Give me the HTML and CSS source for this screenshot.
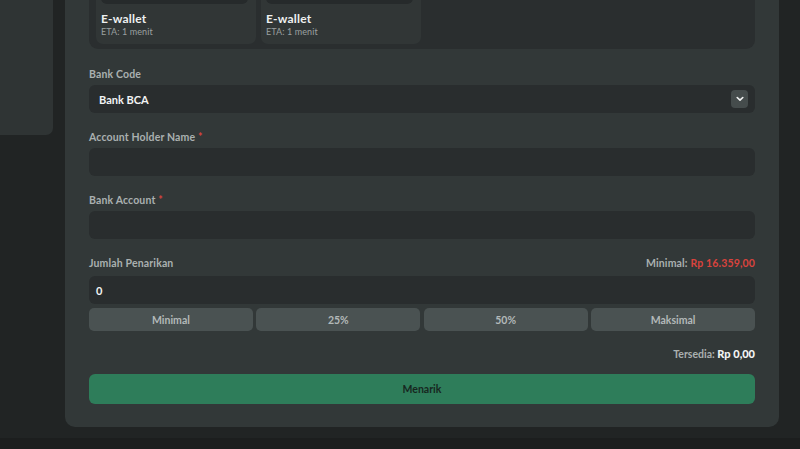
FILE: index.html
```html
<!DOCTYPE html>
<html lang="id">
<head>
<meta charset="utf-8">
<link rel="stylesheet" href="styles.css">
</head>
<body>
<div class="page">
  <aside class="sidebar"></aside>
  <main class="panel">
    <div class="methods">
      <div class="method">
        <div class="method-logo"></div>
        <div class="method-title">E-wallet</div>
        <div class="method-eta">ETA: 1 menit</div>
      </div>
      <div class="method">
        <div class="method-logo"></div>
        <div class="method-title">E-wallet</div>
        <div class="method-eta">ETA: 1 menit</div>
      </div>
    </div>

    <div class="field first">
      <div class="label">Bank Code</div>
      <div class="input select">
        <span class="value">Bank BCA</span>
        <span class="chev"><svg width="8" height="6" viewBox="0 0 8 6"><path d="M1.2 1.5 L4 4.2 L6.8 1.5" fill="none" stroke="#f2f4f4" stroke-width="1.6" stroke-linecap="round" stroke-linejoin="round"/></svg></span>
      </div>
    </div>

    <div class="field">
      <div class="label">Account Holder Name <span class="req">*</span></div>
      <div class="input"></div>
    </div>

    <div class="field">
      <div class="label">Bank Account <span class="req">*</span></div>
      <div class="input"></div>
    </div>

    <div class="field">
      <div class="label row">
        <span>Jumlah Penarikan</span>
        <span>Minimal: <span class="red">Rp 16.359,00</span></span>
      </div>
      <div class="input amount"><span class="value">0</span></div>
      <div class="presets">
        <button class="preset">Minimal</button>
        <button class="preset">25%</button>
        <button class="preset">50%</button>
        <button class="preset">Maksimal</button>
      </div>
    </div>

    <div class="available">Tersedia: <strong>Rp 0,00</strong></div>
    <button class="submit">Menarik</button>
  </main>
</div>
<footer class="footer"></footer>
</body>
</html>
```
FILE: styles.css
```css
* { box-sizing: border-box; }
html, body { margin: 0; padding: 0; }
body {
  background: #212424;
  font-family: Lato, "Noto Sans", sans-serif;
  color: #a9afaf;
  height: 449px;
  overflow: hidden;
}
.page {
  display: flex;
  align-items: flex-start;
  gap: 12px;
  margin-top: -71px;
}
.sidebar {
  width: 53px;
  height: 206px;
  background: #2f3434;
  border-radius: 0 0 7px 0;
  flex: none;
}
.panel {
  width: 714px;
  flex: none;
  background: #323838;
  border-radius: 0 0 10px 10px;
  padding: 24px 24px 23px;
}
.methods {
  display: flex;
  gap: 5px;
  background: #2a2e2f;
  border-radius: 9px;
  padding: 5px 7px 5px 7px;
}
.method {
  width: 160px;
  background: #313636;
  border-radius: 7px;
  padding: 6px 6px 6px 5px;
}
.method-logo {
  height: 40px;
  background: #262a2b;
  border-radius: 6px;
  margin: 0 2px 8px 0;
}
.method-title {
  font-size: 12px;
  font-weight: 700;
  color: #eef0f0;
  line-height: 14px;
  letter-spacing: 0.2px;
}
.method-eta {
  font-size: 9px;
  color: #9aa0a0;
  line-height: 12px;
  letter-spacing: 0.1px;
}
.field { margin-top: 18px; }
.field.first { margin-top: 19px; }
.label {
  font-size: 10.5px;
  font-weight: 700;
  line-height: 12px;
  color: #aab0b0;
  margin-bottom: 5px;
  letter-spacing: 0.15px;
}
.label.row {
  display: flex;
  justify-content: space-between;
  margin-bottom: 7px;
}
.req { color: #d9433d; }
.red { color: #d9433d; }
.input {
  height: 28px;
  background: #292d2e;
  border-radius: 6px;
  display: flex;
  align-items: center;
  padding: 0 7px 0 10px;
}
.input.amount { padding-left: 7px; }
.value {
  font-size: 11px;
  font-weight: 700;
  color: #f2f4f4;
}
.select { justify-content: space-between; }
.chev {
  width: 17px;
  height: 18px;
  background: #454c4c;
  border-radius: 4px;
  display: flex;
  align-items: center;
  justify-content: center;
}
.presets {
  display: grid;
  grid-template-columns: repeat(4, 1fr);
  gap: 3.5px;
  margin-top: 4px;
}
.preset {
  height: 23px;
  border: 0;
  background: #4a5252;
  border-radius: 5px;
  font-family: inherit;
  font-size: 10.5px;
  font-weight: 700;
  color: #b3b9b9;
  padding: 0;
}
.available {
  text-align: right;
  font-size: 10.5px;
  font-weight: 700;
  line-height: 12px;
  color: #aab0b0;
  margin-top: 17px;
}
.available strong { color: #f2f4f4; font-size: 11px; }
.submit {
  display: block;
  width: 100%;
  height: 30px;
  margin-top: 14px;
  border: 0;
  border-radius: 6px;
  background: #2e7d5a;
  color: #17271f;
  font-family: inherit;
  font-size: 10.5px;
  font-weight: 700;
}
.footer {
  height: 20px;
  background: #1c1e1e;
  margin-top: 11px;
}
```
